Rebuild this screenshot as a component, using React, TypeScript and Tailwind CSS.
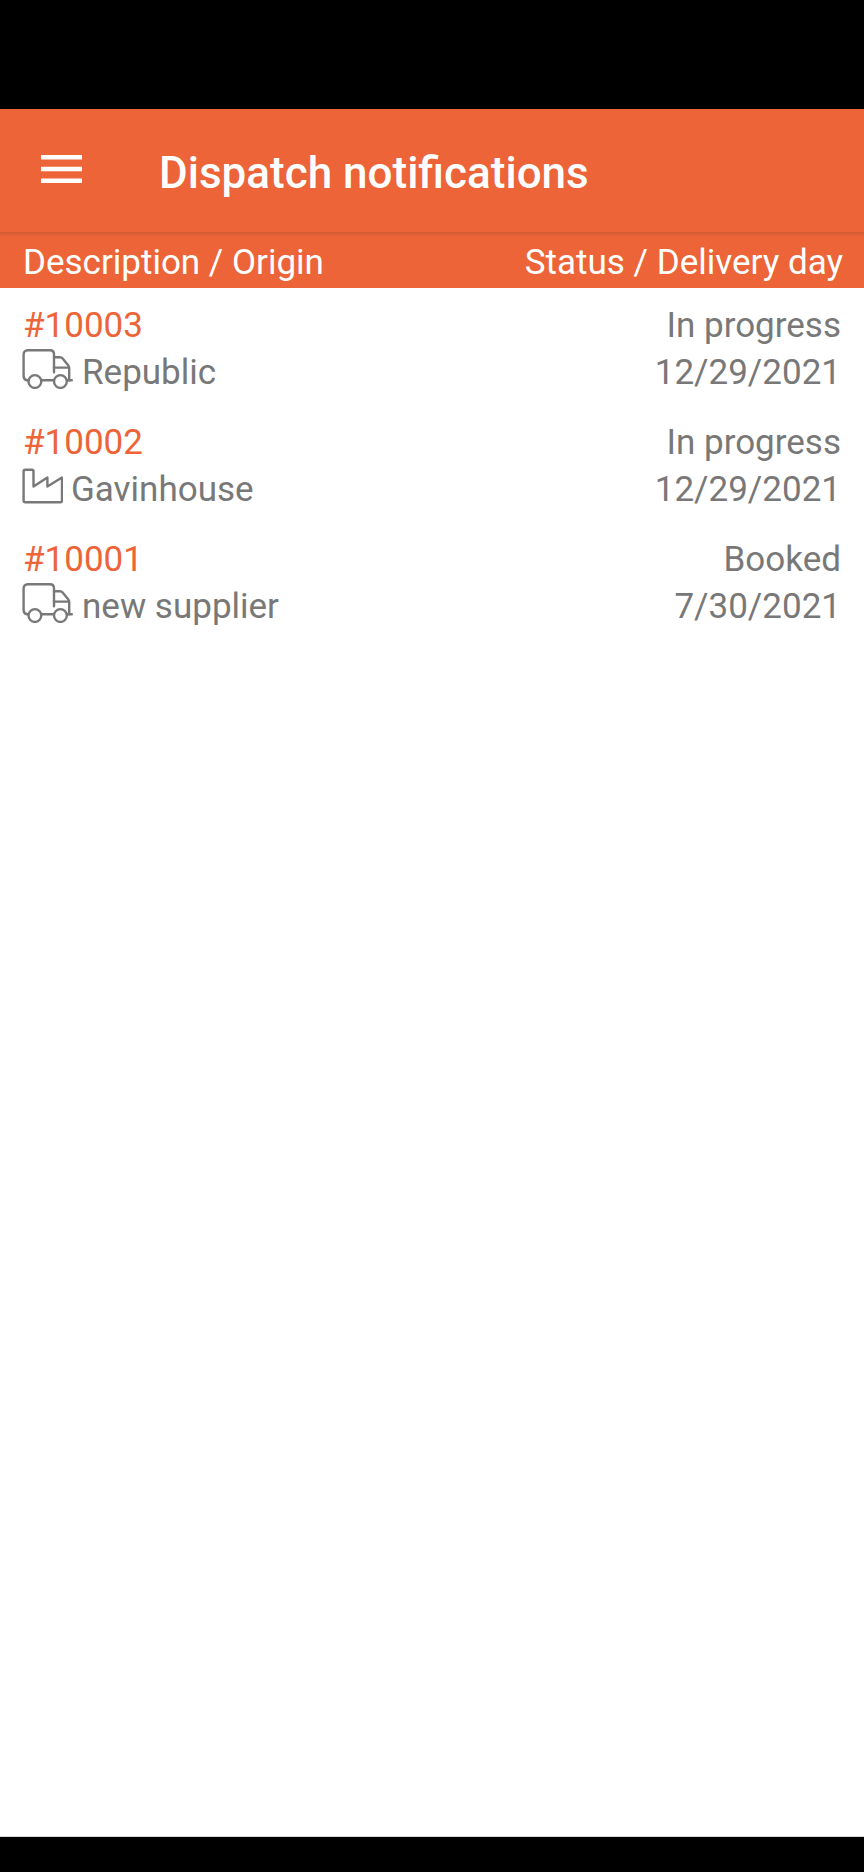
type Origin = 'truck' | 'factory'

interface Dispatch {
  id: number
  origin: Origin
  name: string
  status: string
  deliveryDay: string
}

const dispatches: Dispatch[] = [
  { id: 10003, origin: 'truck', name: 'Republic', status: 'In progress', deliveryDay: '12/29/2021' },
  { id: 10002, origin: 'factory', name: 'Gavinhouse', status: 'In progress', deliveryDay: '12/29/2021' },
  { id: 10001, origin: 'truck', name: 'new supplier', status: 'Booked', deliveryDay: '7/30/2021' },
]

function TruckIcon() {
  return (
    <svg className="w-[52px] h-10 shrink-0" viewBox="0 1 52 40" fill="none" stroke="currentColor" strokeWidth="2.4" strokeLinecap="round" strokeLinejoin="round" aria-hidden="true">
      <path d="M6.3 32.3H5C3 32 1.6 30 1.6 28V6.5C1.6 3.8 3.2 2.2 5.7 2.2H28C30.5 2.2 32 3.7 32 6.2V24.3" />
      <path d="M32 9.2H38C39 9.2 39.7 9.5 40.4 10.3L46 17C46.8 18 47.2 18.8 47.2 20.2V32.3" />
      <path d="M32 19.6H47M19.5 32.3H31.8M45 32.3H49.8" />
      <circle cx="12.9" cy="33.5" r="6.4" />
      <circle cx="38.4" cy="33.5" r="6.4" />
    </svg>
  )
}

function FactoryIcon() {
  return (
    <svg className="w-[41px] h-10 shrink-0" viewBox="0 1 41 40" fill="none" stroke="currentColor" strokeWidth="2.4" strokeLinejoin="round" aria-hidden="true">
      <path d="M1.6 6.4Q1.6 4.8 3.2 4.8H10Q11.5 4.8 11.5 6.4V21.6L25.4 12.6V21.6L40 12.6V35.7Q40 37.3 38.5 37.3H3.2Q1.6 37.3 1.6 35.7Z" />
    </svg>
  )
}

export default function App() {
  return (
    <div className="flex min-h-screen flex-col bg-white font-[Roboto,sans-serif] text-[35px] leading-[47px] text-[#787878]">
      <div className="h-[109px] bg-black" />

      <header className="flex h-[123px] items-center bg-[#ec6437] pl-[41px] text-white">
        <button type="button" aria-label="Open menu" className="mb-1 w-[41px]">
          <svg className="h-7 w-full" viewBox="0 0 41 28" fill="currentColor" aria-hidden="true">
            <path d="M0 0H41V4.6H0zM0 11.7H41V16.3H0zM0 23.4H41V28H0z" />
          </svg>
        </button>
        <h1 className="ml-[77px] mt-1 text-[44px] font-medium leading-[52px]">Dispatch notifications</h1>
      </header>

      <main className="grow">
        <table className="w-full">
          <thead>
            <tr className="h-14 bg-[#ec6437] bg-linear-to-b from-[#d35a32] to-[#ec6437] to-8% text-white">
              <th scope="col" className="pl-[23px] pt-1 text-left font-normal">Description / Origin</th>
              <th scope="col" className="pr-[21px] pt-1 text-right font-normal">Status / Delivery day</th>
            </tr>
          </thead>
          <tbody>
            {dispatches.map((d) => (
              <tr key={d.id}>
                <td className="pb-[9px] pl-[22px] pt-3.5">
                  <p className="pl-px text-[#ec6437]">#{d.id}</p>
                  <div className="flex items-start gap-2">
                    {d.origin === 'truck' ? <TruckIcon /> : <FactoryIcon />}
                    <span>{d.name}</span>
                  </div>
                </td>
                <td className="pb-[9px] pr-[23px] pt-3.5 text-right">
                  <p>{d.status}</p>
                  <p>{d.deliveryDay}</p>
                </td>
              </tr>
            ))}
          </tbody>
        </table>
      </main>

      <div className="h-9 border-t border-[#d6d6d6] bg-black" />
    </div>
  )
}
